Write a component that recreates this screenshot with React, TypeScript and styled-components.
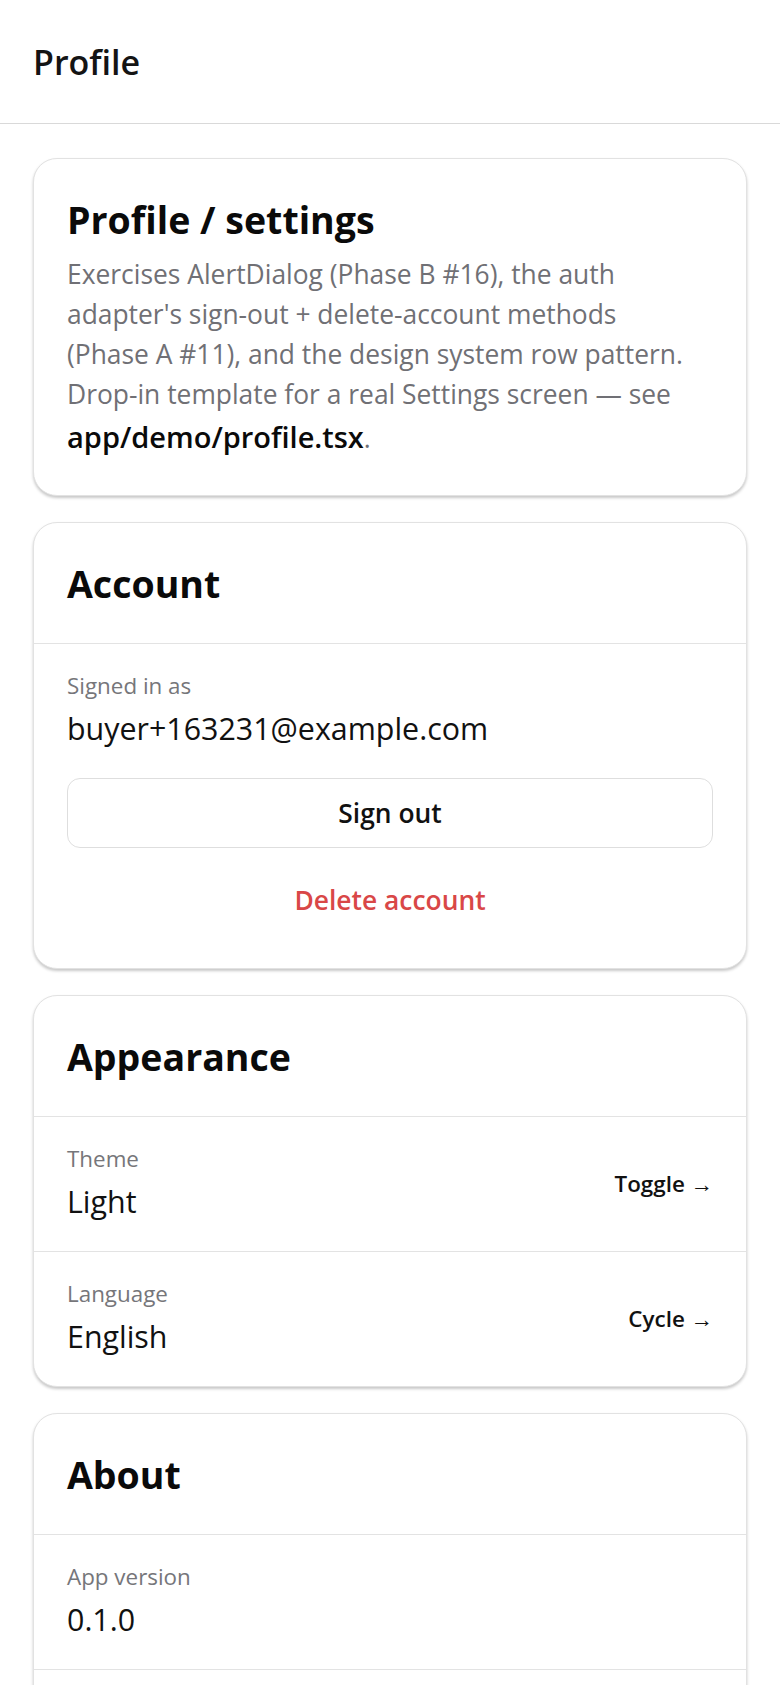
import styled, { createGlobalStyle } from "styled-components";

const GlobalStyle = createGlobalStyle`
  html, body {
    margin: 0;
    padding: 0;
    background: #ffffff;
    font-family: "Open Sans", "Noto Sans", sans-serif;
    color: #111111;
  }
  * {
    box-sizing: border-box;
  }
`

type TRow = {
  label: string,
  value: string,
  action?: string,
}

const rows: Record<string, TRow[]> = {
  appearance: [
    { label: "Theme", value: "Light", action: "Toggle →" },
    { label: "Language", value: "English", action: "Cycle →" },
  ],
  about: [
    { label: "App version", value: "0.1.0" },
    { label: "Platform", value: "web" },
  ],
}

const SettingRow = ({ label, value, action }: TRow) => {
  return (
    <Row>
      <RowText>
        <Label>{label}</Label>
        <Value>{value}</Value>
      </RowText>
      {action && <RowAction>{action}</RowAction>}
    </Row>
  );
};

const Section = ({ title, children }: { title: string, children: React.ReactNode }) => {
  return (
    <Card>
      <CardHeader>
        <CardTitle>{title}</CardTitle>
      </CardHeader>
      {children}
    </Card>
  );
};

export default function App() {
  return (
    <>
      <GlobalStyle />
      <Page>
        <Header>
          <HeaderTitle>Profile</HeaderTitle>
        </Header>
        <Content>
          <Card>
            <IntroBody>
              <CardTitle>Profile / settings</CardTitle>
              <Description>
                Exercises AlertDialog (Phase B #16), the auth adapter's sign-out + delete-account
                methods (Phase A #11), and the design system row pattern. Drop-in template for a
                real Settings screen — see <Code>app/demo/profile.tsx</Code>.
              </Description>
            </IntroBody>
          </Card>

          <Section title="Account">
            <AccountBody>
              <Label>Signed in as</Label>
              <Value>buyer+163231@example.com</Value>
              <OutlineButton>Sign out</OutlineButton>
              <DangerButton>Delete account</DangerButton>
            </AccountBody>
          </Section>

          <Section title="Appearance">
            {rows.appearance.map((r) => (
              <SettingRow key={r.label} {...r} />
            ))}
          </Section>

          <Section title="About">
            {rows.about.map((r) => (
              <SettingRow key={r.label} {...r} />
            ))}
          </Section>
        </Content>
      </Page>
    </>
  );
}

const Page = styled.div`
  min-height: 100vh;
  background: #ffffff;
`
const Header = styled.header`
  height: 124px;
  display: flex;
  align-items: center;
  padding: 0 33px;
  border-bottom: 1px solid #d9d9d9;
`
const HeaderTitle = styled.h1`
  margin: 0;
  font-size: 34px;
  font-weight: 600;
  color: #141414;
  line-height: 44px;
`
const Content = styled.main`
  display: flex;
  flex-direction: column;
  gap: 26px;
  padding: 34px 33px 40px;
`
const Card = styled.section`
  background: #ffffff;
  border: 1px solid #e2e2e2;
  border-radius: 24px;
  box-shadow: 0 2px 3px rgba(0, 0, 0, 0.22);
  overflow: hidden;
`
const IntroBody = styled.div`
  padding: 35px 42px 35px 33px;
`
const CardHeader = styled.div`
  padding: 35px 33px 33px;
  border-bottom: 1px solid #e3e3e3;
`
const CardTitle = styled.h2`
  margin: 0;
  font-size: 37.5px;
  font-weight: 700;
  line-height: 52px;
  color: #0a0a0a;
`
const Description = styled.p`
  margin: 8px 0 0;
  font-size: 26.4px;
  line-height: 40px;
  color: #707075;
`
const Code = styled.span`
  font-size: 29px;
  line-height: 46px;
  font-weight: 600;
  color: #0a0a0a;
`
const AccountBody = styled.div`
  display: flex;
  flex-direction: column;
  padding: 27px 33px 33px;
`
const Label = styled.div`
  font-size: 22.4px;
  line-height: 30px;
  color: #76767a;
`
const Value = styled.div`
  margin-top: 8px;
  font-size: 30.4px;
  line-height: 40px;
  color: #111111;
`
const OutlineButton = styled.button`
  margin-top: 29px;
  height: 70px;
  border: 1px solid #dedede;
  border-radius: 13px;
  background: #ffffff;
  font-family: inherit;
  font-size: 26.4px;
  font-weight: 600;
  color: #111111;
`
const DangerButton = styled.button`
  margin-top: 17px;
  height: 70px;
  border: none;
  background: transparent;
  font-family: inherit;
  font-size: 26.4px;
  font-weight: 600;
  color: #d94747;
`
const Row = styled.div`
  display: flex;
  align-items: center;
  justify-content: space-between;
  padding: 27px 33px 29px;
  & + & {
    border-top: 1px solid #e3e3e3;
  }
`
const RowText = styled.div`
  display: flex;
  flex-direction: column;
`
const RowAction = styled.span`
  font-size: 22.4px;
  font-weight: 600;
  color: #111111;
`
